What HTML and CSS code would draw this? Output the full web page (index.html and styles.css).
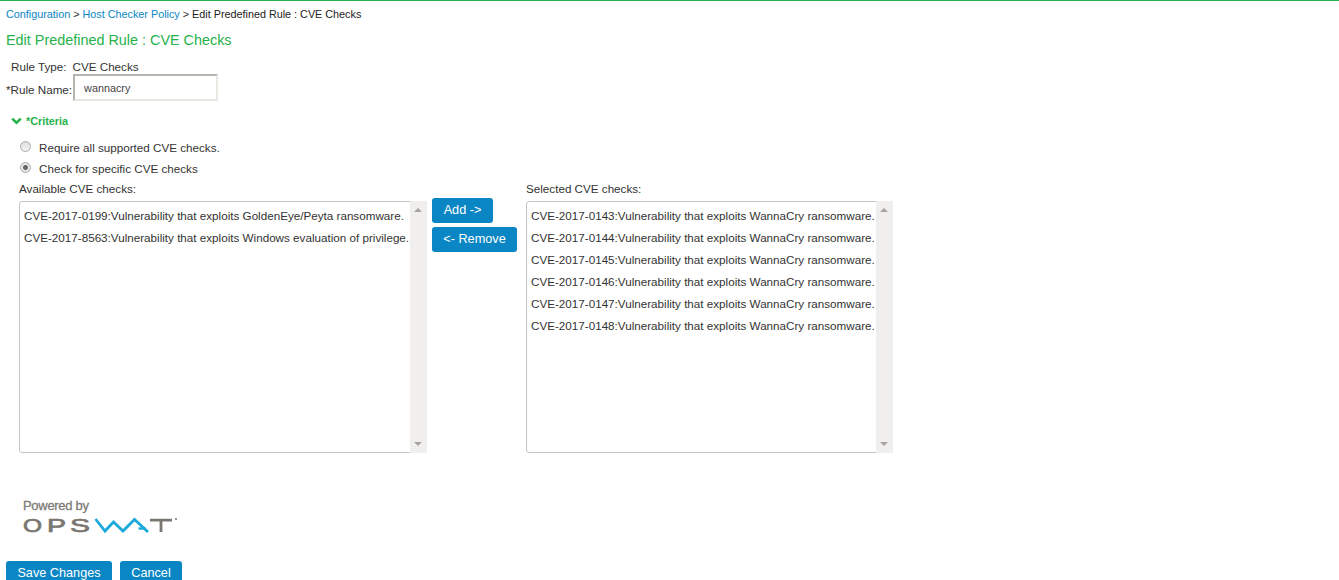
FILE: index.html
```html
<!DOCTYPE html>
<html lang="en">
<head>
<meta charset="utf-8">
<title>Edit Predefined Rule : CVE Checks</title>
<link rel="stylesheet" href="styles.css">
</head>
<body>
<nav class="crumbs"><a href="#">Configuration</a> &gt; <a href="#">Host Checker Policy</a> &gt; <span class="current">Edit Predefined Rule : CVE Checks</span></nav>
<h1 class="title">Edit Predefined Rule : CVE Checks</h1>
<div class="rule-type"><span>Rule Type:</span><span>CVE Checks</span></div>
<div class="rule-name"><label class="name-label" for="rn">*Rule Name:</label><input id="rn" class="name-input" type="text" value="wannacry"></div>
<div class="criteria">
  <svg class="chev" width="11" height="8" viewBox="0 0 11 8"><path d="M1.2 1.6 5.5 5.8 9.8 1.6" fill="none" stroke="#25b24a" stroke-width="2.6"/></svg>
  <span>*Criteria</span>
</div>
<div class="radios">
  <label class="radio-row"><input type="radio" name="c" class="radio"><span>Require all supported CVE checks.</span></label>
  <label class="radio-row"><input type="radio" name="c" class="radio" checked><span>Check for specific CVE checks</span></label>
</div>
<div class="pickers">
  <div class="picker picker-left">
    <div class="picker-label">Available CVE checks:</div>
    <div class="listbox">
      <div class="items">
        <div class="item">CVE-2017-0199:Vulnerability that exploits GoldenEye/Peyta ransomware.</div>
        <div class="item">CVE-2017-8563:Vulnerability that exploits Windows evaluation of privilege.</div>
      </div>
      <div class="scroll"><i class="up"></i><i class="down"></i></div>
    </div>
  </div>
  <div class="moves">
    <button class="btn btn-add" type="button">Add -&gt;</button>
    <button class="btn btn-remove" type="button">&lt;- Remove</button>
  </div>
  <div class="picker picker-right">
    <div class="picker-label">Selected CVE checks:</div>
    <div class="listbox">
      <div class="items">
        <div class="item">CVE-2017-0143:Vulnerability that exploits WannaCry ransomware.</div>
        <div class="item">CVE-2017-0144:Vulnerability that exploits WannaCry ransomware.</div>
        <div class="item">CVE-2017-0145:Vulnerability that exploits WannaCry ransomware.</div>
        <div class="item">CVE-2017-0146:Vulnerability that exploits WannaCry ransomware.</div>
        <div class="item">CVE-2017-0147:Vulnerability that exploits WannaCry ransomware.</div>
        <div class="item">CVE-2017-0148:Vulnerability that exploits WannaCry ransomware.</div>
      </div>
      <div class="scroll"><i class="up"></i><i class="down"></i></div>
    </div>
  </div>
</div>
<div class="logo">
  <div class="powered">Powered by</div>
  <svg class="opswat" width="158" height="23" viewBox="0 0 158 23">
    <text class="ops" x="0" y="16" textLength="19" lengthAdjust="spacingAndGlyphs">O</text>
    <text class="ops" x="24" y="16" textLength="19" lengthAdjust="spacingAndGlyphs">P</text>
    <text class="ops" x="47" y="16" textLength="20" lengthAdjust="spacingAndGlyphs">S</text>
    <path d="M72.5 3 82 15 90.5 6 100 15 111.5 3.5 125 16" fill="none" stroke="#1ba9dc" stroke-width="2.8"/>
    <path d="M115.5 12.5h7" stroke="#1ba9dc" stroke-width="2.4"/>
    <path d="M127 4.2h22M138 4.2V16" fill="none" stroke="#7a7771" stroke-width="2.8"/>
    <circle cx="153" cy="3" r="1" fill="#7a7771"/>
  </svg>
</div>
<div class="actions">
  <button class="btn btn-save" type="button">Save Changes</button>
  <button class="btn btn-cancel" type="button">Cancel</button>
</div>
</body>
</html>
```
FILE: styles.css
```css
html, body { height: 100%; }
body {
  margin: 0;
  height: 580px;
  overflow: hidden;
  box-sizing: border-box;
  border-top: 1px solid #25b24a;
  padding: 0 0 0 6px;
  font-family: "Liberation Sans", Arial, sans-serif;
  font-size: 11.67px;
  color: #333;
  background: #fff;
}
.crumbs { height: 12px; margin-top: 7px; font-size: 10.8px; line-height: 12px; color: #333; }
.crumbs a { color: #0a86c4; text-decoration: none; }
.crumbs .current { color: #222; }
.title { margin: 12px 0 0; height: 16px; font-size: 14.4px; line-height: 16px; font-weight: normal; color: #25b24a; }
.rule-type { display: flex; gap: 6px; margin: 12px 0 0 5px; height: 14px; line-height: 14px; }
.rule-name { display: flex; align-items: center; height: 27px; }
.name-label { position: relative; top: 2px; }
.name-input {
  box-sizing: border-box;
  width: 145px;
  height: 27px;
  margin: 0 0 0 1px;
  padding: 0 9px;
  border: 2px solid #e9e9e4;
  border-top-color: #b5b5ad;
  border-left-color: #b5b5ad;
  font: 10.8px "Liberation Sans", Arial, sans-serif;
  color: #444;
  outline: none;
}
.criteria { display: flex; align-items: center; gap: 4px; margin: 13px 0 0 5px; height: 14px; font-size: 10.8px; font-weight: bold; color: #25b24a; }
.radios { margin: 9px 0 0 14px; }
.radio-row { display: flex; align-items: center; gap: 8px; height: 21px; }
.radio { appearance: none; box-sizing: border-box; width: 11px; height: 11px; margin: -3px 0 0 0; border: 1px solid #a9a9a5; border-radius: 50%; background: linear-gradient(#ddd, #f4f4f4); }
.radio:checked { background: radial-gradient(circle, #666 0 2px, #e8e8e8 3px); }
.pickers { display: flex; margin: 3px 0 0 13px; }
.picker-label { height: 14px; line-height: 14px; margin-bottom: 5px; }
.picker-left { width: 408px; }
.picker-right { width: 367px; }
.listbox { display: flex; box-sizing: border-box; height: 252px; border: 1px solid #c6c6bf; border-radius: 3px; }
.items { flex: 1; padding: 3px 0 0 4px; overflow: hidden; }
.item { height: 22px; line-height: 22px; white-space: nowrap; }
.scroll { position: relative; width: 17px; margin: -1px -1px -1px 0; background: #f0efed; }
.scroll i { position: absolute; left: 4px; width: 0; height: 0; border-left: 4px solid transparent; border-right: 4px solid transparent; }
.scroll .up { top: 7px; border-bottom: 4px solid #a5a5a0; }
.scroll .down { bottom: 7px; border-top: 4px solid #a5a5a0; }
.moves { display: flex; flex-direction: column; align-items: flex-start; gap: 4px; width: 94px; margin: 16px 0 0 5px; }
.btn { border: 0; border-radius: 3px; background: #0a86c4; color: #fff; font: 12.7px "Liberation Sans", Arial, sans-serif; padding: 0 0 2px; height: 25px; }
.btn-add { width: 61px; }
.btn-remove { width: 85px; }
.logo { margin: 45px 0 0 17px; height: 41px; }
.powered { height: 16px; line-height: 16px; font-size: 13px; color: #7d7a74; -webkit-text-stroke: 0.3px #7d7a74; letter-spacing: -0.3px; }
.opswat { display: block; margin-top: 2px; }
.ops { font-family: "Liberation Sans", Arial, sans-serif; font-size: 19px; fill: #7a7771; stroke: #7a7771; stroke-width: 0.7px; }
.actions { display: flex; gap: 8px; margin-top: 22px; }
.btn-save { width: 106px; }
.btn-cancel { width: 62px; }
```
